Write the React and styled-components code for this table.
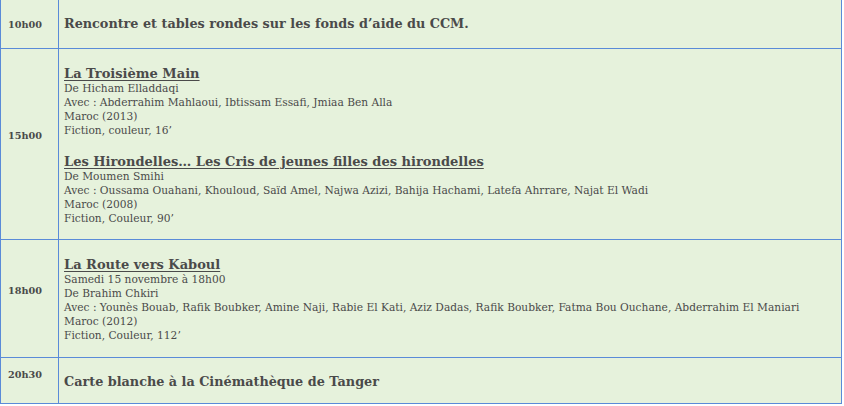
import React from "react";
import styled, { createGlobalStyle } from "styled-components";

const Global = createGlobalStyle`
  html, body { margin: 0; padding: 0; background: #ffffff; }
  body { font-family: "DejaVu Serif", Georgia, serif; color: #4a4a4a; }
`;

const Table = styled.table`
  width: 842px;
  border-collapse: collapse;
  background: #e6f2dc;
  border: 1px solid #5a8bd8;
  border-top: none;
`;

const Row = styled.tr`
  height: ${(p) => p.$h}px;
  &:first-child > td { border-top: none; }
`;

const TimeCell = styled.td`
  width: 44px;
  padding: ${(p) => p.$drop || 0}px 6px ${(p) => p.$lift || 0}px 7px;
  border: 1px solid #5a8bd8;
  vertical-align: middle;
  font-size: 9.7px;
  font-weight: bold;
  color: #4a4a4a;
  font-variant-numeric: oldstyle-nums;
`;

const Cell = styled.td`
  border: 1px solid #5a8bd8;
  padding: ${(p) => p.$pad || "0 0 0 5px"};
  vertical-align: middle;
`;

const Heading = styled.div`
  font-size: 12.8px;
  font-weight: bold;
  line-height: 18px;
  color: #4a4a4a;
`;

const Film = styled.div`
  & + & { margin-top: 15px; }
`;

const Title = styled.div`
  font-size: 13px;
  font-weight: bold;
  line-height: 17px;
  text-decoration: underline;
  text-underline-offset: 2px;
  color: #4a4a4a;
`;

const Line = styled.div`
  font-size: 10.65px;
  line-height: 14px;
  color: #4a4a4a;
`;

const films1 = [
  {
    title: "La Troisième Main",
    lines: [
      "De Hicham Elladdaqi",
      "Avec : Abderrahim Mahlaoui, Ibtissam Essafi, Jmiaa Ben Alla",
      "Maroc (2013)",
      "Fiction, couleur, 16’",
    ],
  },
  {
    title: "Les Hirondelles… Les Cris de jeunes filles des hirondelles",
    lines: [
      "De Moumen Smihi",
      "Avec : Oussama Ouahani, Khouloud, Saïd Amel, Najwa Azizi, Bahija Hachami, Latefa Ahrrare, Najat El Wadi",
      "Maroc (2008)",
      "Fiction, Couleur, 90’",
    ],
  },
];

const film3 = {
  title: "La Route vers Kaboul",
  lines: [
    "Samedi 15 novembre à 18h00",
    "De Brahim Chkiri",
    "Avec : Younès Bouab, Rafik Boubker, Amine Naji, Rabie El Kati, Aziz Dadas, Rafik Boubker, Fatma Bou Ouchane, Abderrahim El Maniari",
    "Maroc (2012)",
    "Fiction, Couleur, 112’",
  ],
};

function FilmBlock({ film }) {
  return (
    <Film>
      <Title>{film.title}</Title>
      {film.lines.map((l) => (
        <Line key={l}>{l}</Line>
      ))}
    </Film>
  );
}

export default function App() {
  return (
    <>
      <Global />
      <Table>
        <tbody>
          <Row $h={48}>
            <TimeCell $drop={2}>10h00</TimeCell>
            <Cell $pad="0 0 0 5px">
              <Heading>Rencontre et tables rondes sur les fonds d’aide du CCM.</Heading>
            </Cell>
          </Row>
          <Row $h={190}>
            <TimeCell $lift={16}>15h00</TimeCell>
            <Cell $pad="16px 0 13px 5px">
              {films1.map((f) => (
                <FilmBlock key={f.title} film={f} />
              ))}
            </Cell>
          </Row>
          <Row $h={117}>
            <TimeCell $lift={16}>18h00</TimeCell>
            <Cell $pad="16px 0 14px 5px">
              <FilmBlock film={film3} />
            </Cell>
          </Row>
          <Row $h={46}>
            <TimeCell $lift={12}>20h30</TimeCell>
            <Cell $pad="3px 0 0 5px">
              <Heading>Carte blanche à la Cinémathèque de Tanger</Heading>
            </Cell>
          </Row>
        </tbody>
      </Table>
    </>
  );
}
